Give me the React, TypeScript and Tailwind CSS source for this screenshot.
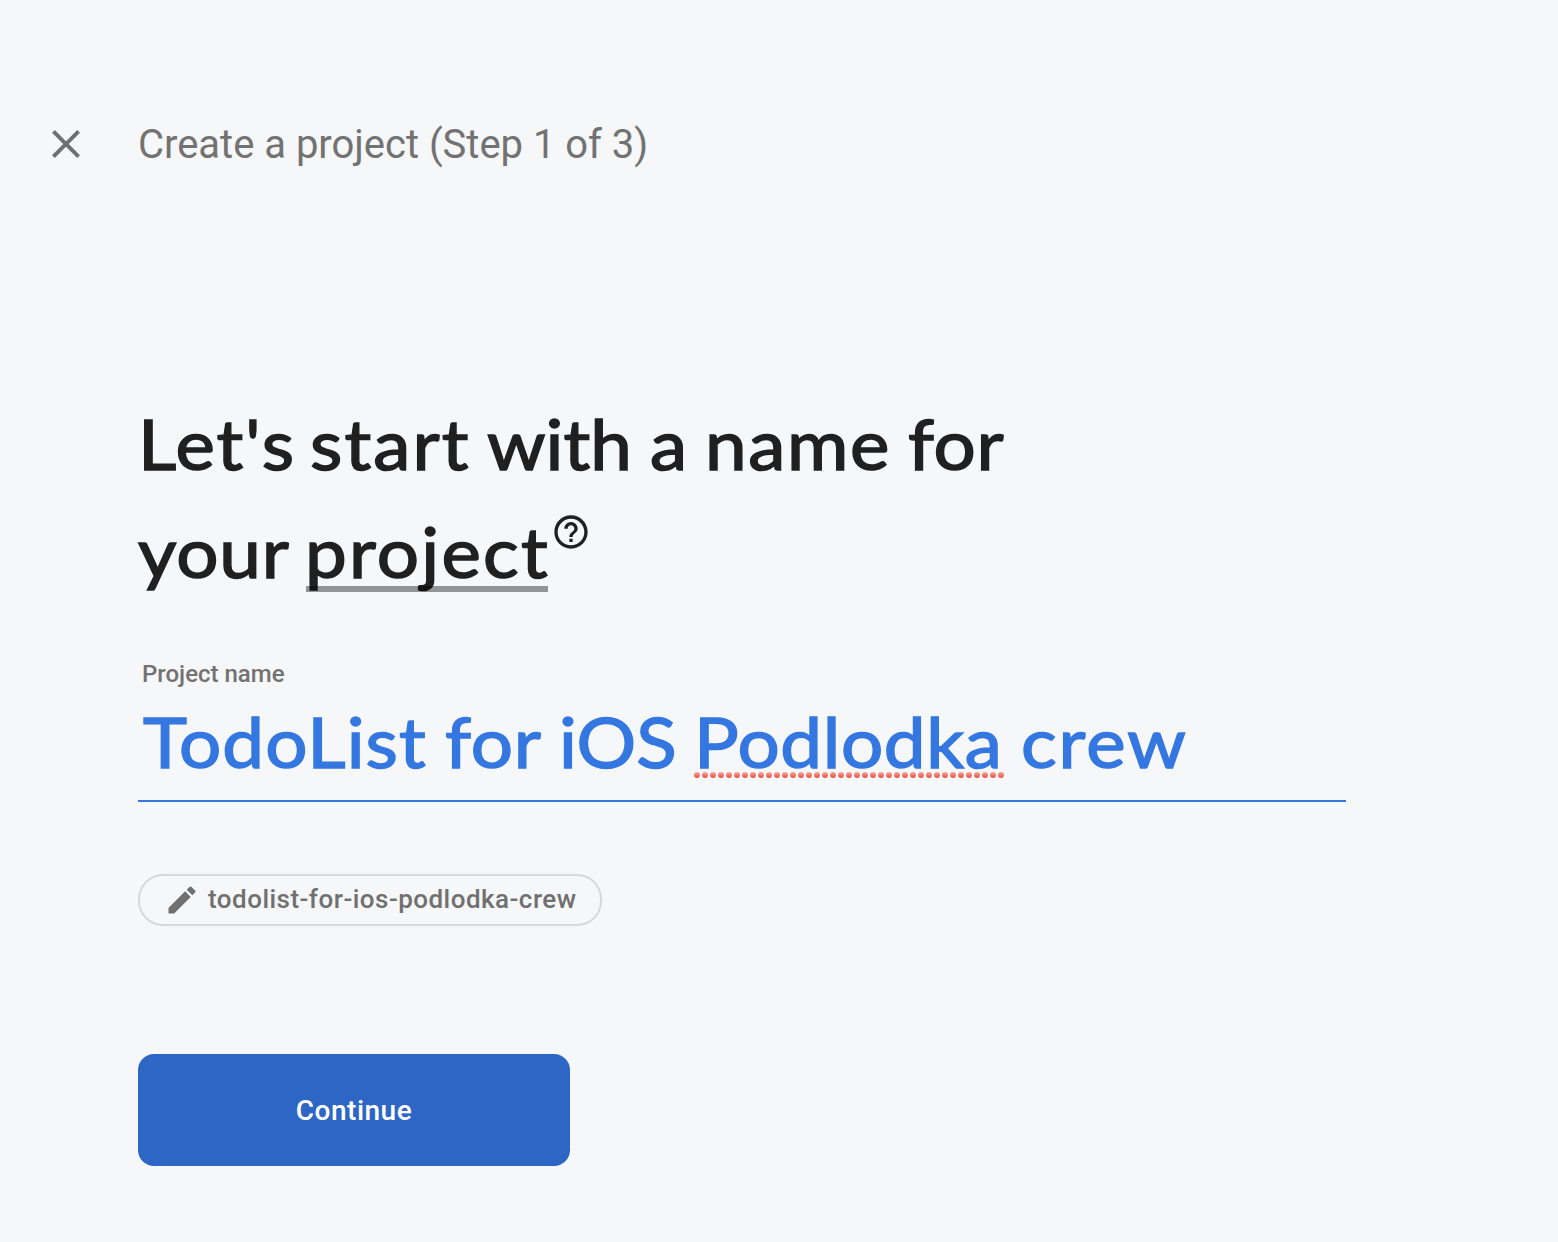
import React from "react";
import { MdClose, MdEdit, MdHelpOutline } from "react-icons/md";

const word = "inline-block origin-left scale-x-[1.065]";

function SpellingDots() {
  return (
    <svg className="absolute top-[84px] left-0" width="312" height="6" viewBox="0 0 312 6" aria-hidden="true">
      <defs>
        <linearGradient id="dot" x1="0" y1="0" x2="0" y2="1">
          <stop offset="0" stopColor="#f2aaa4" />
          <stop offset="1" stopColor="#f04a38" />
        </linearGradient>
      </defs>
      {Array.from({ length: 39 }, (_, i) => (
        <circle key={i} cx={3 + i * 8} cy="3" r="3" fill="url(#dot)" />
      ))}
    </svg>
  );
}

export default function App() {
  return (
    <main className="h-[1242px] w-[1558px] overflow-hidden bg-[#f6f7f9] font-['Roboto',sans-serif]">
      <header className="flex h-[288px] items-center pl-[42px]">
        <button aria-label="Close" className="flex size-12 items-center justify-center text-[#707070]">
          <MdClose size={48} />
        </button>
        <p className="ml-12 pt-px text-[40px] leading-none tracking-[-0.02px] whitespace-nowrap text-[#727272]">Create a project (Step 1 of 3)</p>
      </header>
      <section className="ml-[138px] w-[1208px] pt-[101px]">
        <h1 className="font-['Lato',sans-serif] text-[70px] leading-[108px] text-[#202020] [-webkit-text-stroke:1.5px_#202020]">
          <span className="flex whitespace-nowrap">
            <span className="w-[172px]"><span className={`${word} tracking-[1.8px]`}>Let's</span></span>
            <span className="w-[177px]"><span className={`${word} tracking-[2px]`}>start</span></span>
            <span className="w-[163px]"><span className={word}>with</span></span>
            <span className="w-[55px]"><span className={word}>a</span></span>
            <span className="w-[203px]"><span className={`${word} tracking-[1.6px]`}>name</span></span>
            <span className={`${word} tracking-[0.6px]`}>for</span>
          </span>
          <span className="flex">
            <span className="w-[167px]"><span className={`${word} tracking-[0.8px]`}>your</span></span>
            <span className="relative w-[247px]">
              <span className={`${word} tracking-[2.1px]`}>project</span>
              <span className="absolute top-[89px] left-px h-1.5 w-[242px] bg-black/40" />
            </span>
            <MdHelpOutline size={40} className="mt-[15px] -ml-px" strokeWidth={0} />
          </span>
        </h1>
        <label className="mt-[55px] block pl-1 text-[24px] leading-7 font-medium text-[#727272]">Project name</label>
        <div className="flex h-[114px] border-b-2 border-[#3477e0] font-['Lato',sans-serif] text-[70px] leading-[107px] whitespace-nowrap text-[#3477e0] [-webkit-text-stroke:1.5px_#3477e0]">
          <span className="ml-[5px] w-[302px]"><span className={`${word} tracking-[1px]`}>TodoList</span></span>
          <span className="w-[114px]"><span className={`${word} tracking-[0.8px]`}>for</span></span>
          <span className="w-[135px]"><span className={`${word} tracking-[0.2px]`}>iOS</span></span>
          <span className="relative w-[327px]">
            <span className={`${word} tracking-[0.6px]`}>Podlodka</span>
            <SpellingDots />
          </span>
          <span className={`${word} tracking-[1.9px]`}>crew</span>
        </div>
        <button className="mt-[72px] flex h-[52px] w-[464px] items-center rounded-[25px] border-2 border-[#d7d8da] pl-6 text-[26px] font-medium text-[#707070]">
          <MdEdit size={36} />
          <span className="ml-2 pb-0.5 tracking-[0.47px]">todolist-for-ios-podlodka-crew</span>
        </button>
        <button className="mt-32 h-28 w-[432px] rounded-2xl bg-[#2d66c5] pt-0.5 text-[28px] font-medium tracking-[0.5px] text-white">Continue</button>
      </section>
    </main>
  );
}
